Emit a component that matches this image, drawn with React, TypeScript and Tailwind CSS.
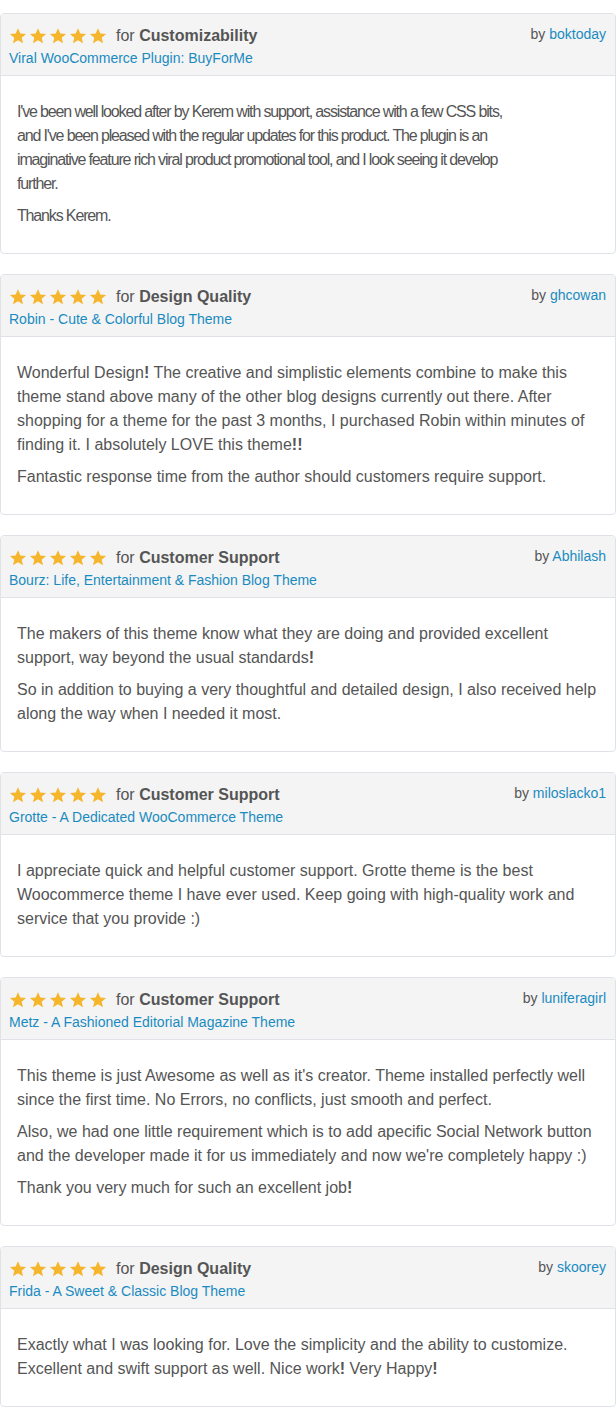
import React from 'react';

type Review = {
  category: string;
  product: string;
  author: string;
  paragraphs: string[];
  bodyClass?: string;
};

const reviews: Review[] = [
  {
    category: 'Customizability',
    product: 'Viral WooCommerce Plugin: BuyForMe',
    author: 'boktoday',
    // this one is set narrower in the original
    bodyClass: 'max-w-[510px] tracking-[-1.15px]',
    paragraphs: [
      "I've been well looked after by Kerem with support, assistance with a few CSS bits, and I've been pleased with the regular updates for this product. The plugin is an imaginative feature rich viral product promotional tool, and I look seeing it develop further.",
      'Thanks Kerem.',
    ],
  },
  {
    category: 'Design Quality',
    product: 'Robin - Cute & Colorful Blog Theme',
    author: 'ghcowan',
    paragraphs: [
      'Wonderful Design! The creative and simplistic elements combine to make this theme stand above many of the other blog designs currently out there. After shopping for a theme for the past 3 months, I purchased Robin within minutes of finding it. I absolutely LOVE this theme!!',
      'Fantastic response time from the author should customers require support.',
    ],
  },
  {
    category: 'Customer Support',
    product: 'Bourz: Life, Entertainment & Fashion Blog Theme',
    author: 'Abhilash',
    paragraphs: [
      'The makers of this theme know what they are doing and provided excellent support, way beyond the usual standards!',
      'So in addition to buying a very thoughtful and detailed design, I also received help along the way when I needed it most.',
    ],
  },
  {
    category: 'Customer Support',
    product: 'Grotte - A Dedicated WooCommerce Theme',
    author: 'miloslacko1',
    paragraphs: [
      'I appreciate quick and helpful customer support. Grotte theme is the best Woocommerce theme I have ever used. Keep going with high-quality work and service that you provide :)',
    ],
  },
  {
    category: 'Customer Support',
    product: 'Metz - A Fashioned Editorial Magazine Theme',
    author: 'luniferagirl',
    paragraphs: [
      "This theme is just Awesome as well as it's creator. Theme installed perfectly well since the first time. No Errors, no conflicts, just smooth and perfect.",
      "Also, we had one little requirement which is to add apecific Social Network button and the developer made it for us immediately and now we're completely happy :)",
      'Thank you very much for such an excellent job!',
    ],
  },
  {
    category: 'Design Quality',
    product: 'Frida - A Sweet & Classic Blog Theme',
    author: 'skoorey',
    paragraphs: [
      'Exactly what I was looking for. Love the simplicity and the ability to customize. Excellent and swift support as well. Nice work! Very Happy!',
    ],
  },
];

const Star = () => (
  <svg width="18" height="18" viewBox="0 0 24 24" className="shrink-0">
    <path
      d="M12 1.5l3.1 7.1 7.7.6-5.9 5 1.8 7.6L12 17.8l-6.7 4 1.8-7.6-5.9-5 7.7-.6z"
      fill="#f5b62d"
    />
  </svg>
);

// exclamation marks show up heavier in the original
const withBangs = (text: string) =>
  text.split(/(!+)/).map((part, i) =>
    part.startsWith('!') ? (
      <b key={i} className="font-bold">
        {part}
      </b>
    ) : (
      <React.Fragment key={i}>{part}</React.Fragment>
    )
  );

const ReviewCard = ({ review }: { review: Review }) => (
  <div className="border border-[#dfe3e8] rounded-[4px] bg-white overflow-hidden">
    {/* Header */}
    <div className="bg-[#f4f4f4] border-b border-[#dfe3e8] pl-[8px] pr-[9px] pt-[10px] pb-[7px] flex justify-between items-start">
      <div>
        <div className="flex items-center h-[24px]">
          <div className="flex gap-[2px] mr-[9px]">
            <Star />
            <Star />
            <Star />
            <Star />
            <Star />
          </div>
          <span className="text-[16px] text-[#555]">
            for <b className="font-bold">{review.category}</b>
          </span>
        </div>
        <a href="#" className="block text-[14px] leading-[20px] text-[#1a8bc1]">
          {review.product}
        </a>
      </div>
      <div className="text-[14px] leading-[20px] text-[#555]">
        by <a href="#" className="text-[#1a8bc1]">{review.author}</a>
      </div>
    </div>

    {/* Body */}
    <div className="px-[16px] pt-[24px] pb-[17px] text-[16px] leading-[24px] text-[#555]">
      {review.paragraphs.map((p, i) => (
        <p key={i} className={`mb-[8px] ${review.bodyClass ?? ''}`}>
          {withBangs(p)}
        </p>
      ))}
    </div>
  </div>
);

export default function App() {
  return (
    <div
      className="bg-white w-[616px] pt-[13px] pb-[1px] flex flex-col gap-[20px]"
      style={{ fontFamily: '"Liberation Sans", Arial, sans-serif' }}
    >
      {reviews.map((r, i) => (
        <ReviewCard key={i} review={r} />
      ))}
    </div>
  );
}
